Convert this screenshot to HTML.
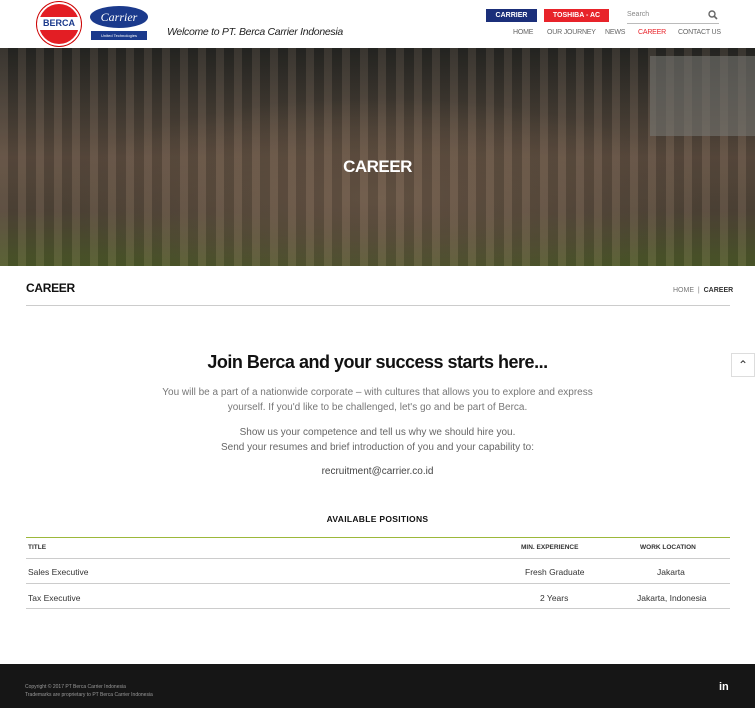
<!DOCTYPE html>
<html><head><meta charset="utf-8"><style>
*{margin:0;padding:0;box-sizing:border-box}
body{width:755px;height:708px;overflow:hidden;background:#fff;font-family:"Liberation Sans",sans-serif;color:#333;position:relative}
.abs{position:absolute}
.nav a{position:absolute;top:29px;font-size:7px;color:#666;text-decoration:none;letter-spacing:-.2px}
.hero{top:48px;left:0;width:755px;height:218px;background:
radial-gradient(ellipse 320px 100px at 380px 150px,#7a6450,transparent),
linear-gradient(180deg,#2a2a26 0%,#4a4238 25%,#6b5848 50%,#5e5040 75%,#5a6a2e 100%);}
.hero .ov{position:absolute;inset:0;background:
repeating-linear-gradient(90deg,rgba(220,190,170,.14) 0 8px,rgba(40,40,40,.12) 8px 18px);}
</style></head><body>
<div class="abs" style="left:37px;top:2px;width:44px;height:44px;border-radius:50%;background:#e31e24;border:2px solid #fff;box-shadow:0 0 0 1px #c00"></div>
<div class="abs" style="left:39px;top:17px;width:40px;height:13px;background:#fff;color:#1b3a8c;font-weight:bold;font-size:9px;text-align:center;line-height:13px">BERCA</div>
<div class="abs" style="left:90px;top:6px;width:58px;height:22px;border-radius:50%;background:#1b3a8c;color:#fff;font-family:'Liberation Serif',serif;font-style:italic;font-size:12px;text-align:center;line-height:22px">Carrier</div>
<div class="abs" style="left:91px;top:31px;width:56px;height:9px;background:#1b3a8c;color:#fff;font-size:4px;line-height:9px;padding-left:10px">United Technologies</div>
<div class="abs" style="left:167px;top:26px;font-size:10.5px;font-style:italic;color:#222;letter-spacing:-.3px">Welcome to PT. Berca Carrier Indonesia</div>
<div class="abs" style="left:486px;top:9px;width:51px;height:13px;background:#1b2f7a;color:#fff;font-size:7px;font-weight:bold;text-align:center;line-height:13px">CARRIER</div>
<div class="abs" style="left:544px;top:9px;width:65px;height:13px;background:#e8232a;color:#fff;font-size:7px;font-weight:bold;text-align:center;line-height:13px">TOSHIBA - AC</div>
<div class="abs" style="left:627px;top:11px;font-size:7px;color:#888">Search</div>
<div class="abs" style="left:627px;top:23px;width:92px;height:1px;background:#bbb"></div>
<svg class="abs" style="left:708px;top:10px" width="10" height="10" viewBox="0 0 10 10"><circle cx="4" cy="4" r="3" fill="none" stroke="#666" stroke-width="1.4"/><path d="M6.2 6.2L9 9" stroke="#666" stroke-width="1.6"/></svg>
<div class="nav">
<a style="left:513px">HOME</a><a style="left:547px">OUR JOURNEY</a><a style="left:605px">NEWS</a><a style="left:638px;color:#e8232a">CAREER</a><a style="left:678px">CONTACT US</a></div>
<div class="abs hero"><div class="ov"></div>
<div class="abs" style="left:650px;top:8px;width:105px;height:80px;background:#8a8a85;opacity:.6"></div>
<div class="abs" style="left:0;top:0;width:755px;height:218px;background:rgba(0,0,0,.15)"></div>
<div class="abs" style="left:0;top:109px;width:755px;text-align:center;color:#fff;font-weight:bold;font-size:17px;letter-spacing:-.5px">CAREER</div></div>
<div class="abs" style="left:26px;top:281px;font-size:12px;font-weight:bold;color:#111;letter-spacing:-.3px">CAREER</div>
<div class="abs" style="left:673px;top:287px;font-size:7px;color:#777">HOME&nbsp; | &nbsp;<b style="color:#333">CAREER</b></div>
<div class="abs" style="left:26px;top:305px;width:704px;height:1px;background:#ccc"></div>
<div class="abs" style="left:731px;top:353px;width:24px;height:24px;background:#fff;border:1px solid #ddd;text-align:center;line-height:22px;font-size:12px;color:#333">⌃</div>
<div class="abs" style="left:0;top:352px;width:755px;text-align:center;font-size:18px;font-weight:bold;color:#111;letter-spacing:-.5px">Join Berca and your success starts here...</div>
<div class="abs" style="left:0;top:385px;width:755px;text-align:center;font-size:10px;color:#777;line-height:15px">You will be a part of a nationwide corporate – with cultures that allows you to explore and express<br>yourself. If you'd like to be challenged, let's go and be part of Berca.</div>
<div class="abs" style="left:0;top:425px;width:755px;text-align:center;font-size:10px;color:#666;line-height:15px">Show us your competence and tell us why we should hire you.<br>Send your resumes and brief introduction of you and your capability to:</div>
<div class="abs" style="left:0;top:466px;width:755px;text-align:center;font-size:10px;color:#444">recruitment@carrier.co.id</div>
<div class="abs" style="left:0;top:514px;width:755px;text-align:center;font-size:8.5px;font-weight:bold;color:#111;letter-spacing:.3px">AVAILABLE POSITIONS</div>
<div class="abs" style="left:26px;top:537px;width:704px;height:1px;background:#9cb83a"></div>
<div class="abs" style="left:28px;top:544px;font-size:6.5px;font-weight:bold">TITLE</div>
<div class="abs" style="left:521px;top:544px;font-size:6.5px;font-weight:bold">MIN. EXPERIENCE</div>
<div class="abs" style="left:640px;top:544px;font-size:6.5px;font-weight:bold">WORK LOCATION</div>
<div class="abs" style="left:26px;top:558px;width:704px;height:1px;background:#ccc"></div>
<div class="abs" style="left:28px;top:567px;font-size:8.5px">Sales Executive</div>
<div class="abs" style="left:525px;top:567px;font-size:8.5px">Fresh Graduate</div>
<div class="abs" style="left:657px;top:567px;font-size:8.5px">Jakarta</div>
<div class="abs" style="left:26px;top:583px;width:704px;height:1px;background:#ccc"></div>
<div class="abs" style="left:28px;top:593px;font-size:8.5px">Tax Executive</div>
<div class="abs" style="left:540px;top:593px;font-size:8.5px">2 Years</div>
<div class="abs" style="left:637px;top:593px;font-size:8.5px">Jakarta, Indonesia</div>
<div class="abs" style="left:26px;top:608px;width:704px;height:1px;background:#ccc"></div>
<div class="abs" style="left:0;top:664px;width:755px;height:44px;background:#161616"></div>
<div class="abs" style="left:25px;top:683px;font-size:5px;color:#999;line-height:8px">Copyright © 2017 PT Berca Carrier Indonesia<br>Trademarks are proprietary to PT Berca Carrier Indonesia</div>
<div class="abs" style="left:719px;top:681px;font-size:11px;font-weight:bold;color:#fff">in</div>
</body></html>
